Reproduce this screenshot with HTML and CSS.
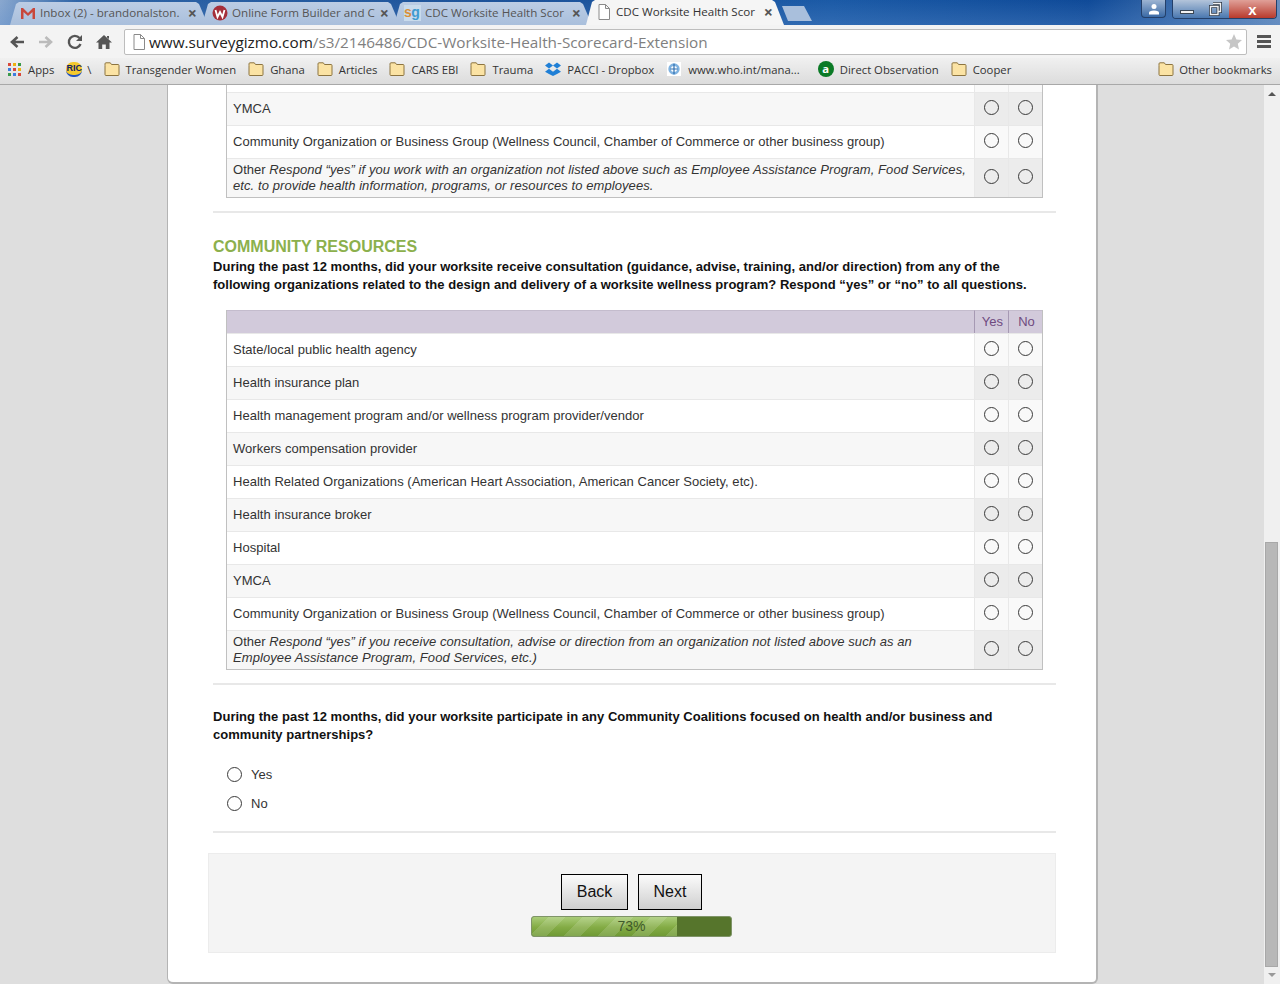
FILE: index.html
```html
<!DOCTYPE html>
<html lang="en">
  <head>
    <meta charset="UTF-8" />
    <meta name="viewport" content="width=device-width, initial-scale=1.0" />
    <title>CDC Worksite Health Scorecard</title>
    <link rel="stylesheet" href="styles.css">
  </head>
  <body>
    <svg class="defs" width="0" height="0">
      <symbol id="folder" viewBox="0 0 16 14">
        <path d="M1 3.500V12.500a1 1 0 0 0 1 1H14a1 1 0 0 0 1-1V3.500a1 1 0 0 0-1-1H7.500L6.300 .8H2A1 1 0 0 0 1 1.800Z" fill="#fbe3a4" stroke="#8c7440"/>
      </symbol>
      <symbol id="page" viewBox="0 0 14 16">
        <path d="M2 .5H8.500L12.500 4.500V15.500H2Z M8.500 .5V4.500H12.500" fill="#fff" stroke="#8a8a8a"/>
      </symbol>
    </svg>

    <!-- browser window top -->
    <div class="tabstrip">
      <div class="tab">
        <svg class="tab-icon" viewBox="0 0 16 16"><path d="M1 3H3L8 8L13 3H15V14H12.500V7L8 11L3.500 7V14H1Z" fill="#c8483c"/></svg>
        <span class="tab-title">Inbox (2) - brandonalston.</span><span class="tab-x">×</span>
      </div>
      <div class="tab">
        <svg class="tab-icon" viewBox="0 0 16 16"><circle cx="8" cy="8" r="7.500" fill="#a52f3a"/><path d="M3.500 5L5.500 12L8 7L10.500 12L12.500 5" fill="none" stroke="#fff" stroke-width="1.800"/></svg>
        <span class="tab-title">Online Form Builder and C</span><span class="tab-x">×</span>
      </div>
      <div class="tab">
        <span class="sg-icon"><b>s</b><i>g</i></span>
        <span class="tab-title">CDC Worksite Health Scor</span><span class="tab-x">×</span>
      </div>
      <div class="tab tab-active">
        <svg class="tab-icon" viewBox="0 0 14 16"><use href="#page"/></svg>
        <span class="tab-title">CDC Worksite Health Scor</span><span class="tab-x">×</span>
      </div>
      <div class="tab-new"></div>
      <div class="window-btns">
        <div class="win-btn win-user">
          <svg width="12" height="12" viewBox="0 0 12 12"><circle cx="6" cy="3.500" r="2.500" fill="#fff"/><path d="M1 11.500V9.500Q1 8 6 7.500Q11 8 11 9.500V11.500Z" fill="#fff"/></svg>
        </div>
        <div class="win-group">
          <div class="win-btn win-min"><span class="min-bar"></span></div>
          <div class="win-btn win-max">
            <svg width="13" height="14" viewBox="0 0 13 14"><path d="M4 1.500H11.500V9.500H9M1.500 4.500H9V12.500H1.500Z" fill="none" stroke="#2f3a48" stroke-width="3"/><path d="M4 1.500H11.500V9.500H9M1.500 4.500H9V12.500H1.500Z" fill="none" stroke="#f2f2f2" stroke-width="1.400"/></svg>
          </div>
          <div class="win-btn win-close">x</div>
        </div>
      </div>
    </div>

    <div class="toolbar">
      <svg class="tool-icon" viewBox="0 0 16 16"><path d="M15 8H4M8.500 3L3 8L8.500 13" fill="none" stroke="#555" stroke-width="2.600"/></svg>
      <svg class="tool-icon" viewBox="0 0 16 16"><path d="M1 8H12M7.500 3L13 8L7.500 13" fill="none" stroke="#bbb" stroke-width="2.600"/></svg>
      <svg class="tool-icon" viewBox="0 0 16 16"><path d="M13.500 10A6 6 0 1 1 12.500 4" fill="none" stroke="#555" stroke-width="2.400"/><path d="M15 1V7H9Z" fill="#555"/></svg>
      <svg class="tool-icon" viewBox="0 0 16 16"><path d="M8 1L16 8.500H13.500V15H9.800V10.500H6.200V15H2.500V8.500H0Z M11 2H13V5L11 3.500Z" fill="#555"/></svg>
      <div class="omnibox">
        <svg class="omni-page" viewBox="0 0 14 16"><use href="#page"/></svg>
        <span class="url"><span class="url-host">www.surveygizmo.com</span>/s3/2146486/CDC-Worksite-Health-Scorecard-Extension</span>
        <svg class="omni-star" viewBox="0 0 16 16"><path d="M8 0L10.400 5.400L16 6L11.800 9.800L13 15.500L8 12.600L3 15.500L4.200 9.800L0 6L5.600 5.400Z" fill="#c6c6c6"/></svg>
      </div>
      <div class="menu-btn"><span></span><span></span><span></span></div>
    </div>

    <div class="bookmarks">
      <div class="bm bm-apps">
        <span class="apps-grid"><i class="r"></i><i class="y"></i><i class="g"></i><i class="b"></i><i class="r"></i><i class="y"></i><i class="g"></i><i class="b"></i><i class="r"></i></span>
        Apps
      </div>
      <div class="bm bm-ric"><span class="ric-icon">RIC</span>\</div>
      <div class="bm"><svg class="bm-icon"><use href="#folder"/></svg>Transgender Women</div>
      <div class="bm"><svg class="bm-icon"><use href="#folder"/></svg>Ghana</div>
      <div class="bm"><svg class="bm-icon"><use href="#folder"/></svg>Articles</div>
      <div class="bm"><svg class="bm-icon"><use href="#folder"/></svg>CARS EBI</div>
      <div class="bm"><svg class="bm-icon"><use href="#folder"/></svg>Trauma</div>
      <div class="bm">
        <svg class="bm-icon" viewBox="0 0 16 14"><path d="M4 .5L8 3.500L4 6.500L0 3.500Z M12 .5L16 3.500L12 6.500L8 3.500Z M4 6.800L8 9.800L12 6.800L16 9.800L12 12L8 14L4 12L0 9.800Z" fill="#1f7fd6"/></svg>
        PACCI - Dropbox
      </div>
      <div class="bm bm-who">
        <svg class="bm-icon" viewBox="0 0 16 16"><rect width="16" height="16" fill="#fff"/><circle cx="8" cy="8" r="6.500" fill="#7fb2e0"/><circle cx="8" cy="8" r="3.500" fill="#fff"/><path d="M8 2V14M4 8H12" stroke="#2f6fb0" stroke-width="1.400"/></svg>
        www.who.int/mana...
      </div>
      <div class="bm"><span class="a-icon">a</span>Direct Observation</div>
      <div class="bm"><svg class="bm-icon"><use href="#folder"/></svg>Cooper</div>
      <div class="bm bm-other"><svg class="bm-icon"><use href="#folder"/></svg>Other bookmarks</div>
    </div>

    <div class="viewport">
      <div class="page-area">
        <div class="card">
          <table class="grid-table grid-top">
            <tr class="row-cut"><td></td><td class="opt"></td><td class="opt"></td></tr>
            <tr class="alt">
              <td>YMCA</td>
              <td class="opt"><input type="radio" name="a8"></td>
              <td class="opt"><input type="radio" name="a8"></td>
            </tr>
            <tr>
              <td>Community Organization or Business Group (Wellness Council, Chamber of Commerce or other business group)</td>
              <td class="opt"><input type="radio" name="a9"></td>
              <td class="opt"><input type="radio" name="a9"></td>
            </tr>
            <tr class="alt row-tall">
              <td>Other <em>Respond “yes” if you work with an organization not listed above such as Employee Assistance Program, Food Services, etc. to provide health information, programs, or resources to employees.</em></td>
              <td class="opt"><input type="radio" name="a10"></td>
              <td class="opt"><input type="radio" name="a10"></td>
            </tr>
          </table>
          <div class="divider"></div>

          <h2 class="section-title">COMMUNITY RESOURCES</h2>
          <p class="question">During the past 12 months, did your worksite receive consultation (guidance, advise, training, and/or direction) from any of the following organizations related to the design and delivery of a worksite wellness program? Respond “yes” or “no” to all questions.</p>

          <table class="grid-table">
            <tr class="head"><td></td><td class="opt">Yes</td><td class="opt">No</td></tr>
            <tr>
              <td>State/local public health agency</td>
              <td class="opt"><input type="radio" name="b1"></td>
              <td class="opt"><input type="radio" name="b1"></td>
            </tr>
            <tr class="alt">
              <td>Health insurance plan</td>
              <td class="opt"><input type="radio" name="b2"></td>
              <td class="opt"><input type="radio" name="b2"></td>
            </tr>
            <tr>
              <td>Health management program and/or wellness program provider/vendor</td>
              <td class="opt"><input type="radio" name="b3"></td>
              <td class="opt"><input type="radio" name="b3"></td>
            </tr>
            <tr class="alt">
              <td>Workers compensation provider</td>
              <td class="opt"><input type="radio" name="b4"></td>
              <td class="opt"><input type="radio" name="b4"></td>
            </tr>
            <tr>
              <td>Health Related Organizations (American Heart Association, American Cancer Society, etc).</td>
              <td class="opt"><input type="radio" name="b5"></td>
              <td class="opt"><input type="radio" name="b5"></td>
            </tr>
            <tr class="alt">
              <td>Health insurance broker</td>
              <td class="opt"><input type="radio" name="b6"></td>
              <td class="opt"><input type="radio" name="b6"></td>
            </tr>
            <tr>
              <td>Hospital</td>
              <td class="opt"><input type="radio" name="b7"></td>
              <td class="opt"><input type="radio" name="b7"></td>
            </tr>
            <tr class="alt">
              <td>YMCA</td>
              <td class="opt"><input type="radio" name="b8"></td>
              <td class="opt"><input type="radio" name="b8"></td>
            </tr>
            <tr>
              <td>Community Organization or Business Group (Wellness Council, Chamber of Commerce or other business group)</td>
              <td class="opt"><input type="radio" name="b9"></td>
              <td class="opt"><input type="radio" name="b9"></td>
            </tr>
            <tr class="alt row-tall">
              <td>Other <em>Respond “yes” if you receive consultation, advise or direction from an organization not listed above such as an<br>Employee Assistance Program, Food Services, etc.)</em></td>
              <td class="opt"><input type="radio" name="b10"></td>
              <td class="opt"><input type="radio" name="b10"></td>
            </tr>
          </table>
          <div class="divider"></div>

          <p class="question question-solo">During the past 12 months, did your worksite participate in any Community Coalitions focused on health and/or business and community partnerships?</p>
          <div class="choices">
            <label class="choice"><input type="radio" name="c1">Yes</label>
            <label class="choice"><input type="radio" name="c1">No</label>
          </div>
          <div class="divider divider-last"></div>

          <div class="footer-panel">
            <div class="footer-btns">
              <button class="nav-btn nav-back">Back</button>
              <button class="nav-btn nav-next">Next</button>
            </div>
            <div class="progress">
              <div class="progress-fill" style="width: 73%"></div>
              <span class="progress-text">73%</span>
            </div>
          </div>
        </div>
      </div>

      <div class="scrollbar">
        <div class="arrow-up"></div>
        <div class="scroll-track"><div class="scroll-thumb"></div></div>
        <div class="arrow-down"></div>
      </div>
    </div>
  </body>
</html>
```

FILE: styles.css
```css
* {
  box-sizing: border-box;
}
html,
body {
  margin: 0;
  height: 100%;
  overflow: hidden;
}
body {
  display: flex;
  flex-direction: column;
  font-family: "Liberation Sans", Arial, sans-serif;
  background-color: #dedede;
}
.defs {
  position: absolute;
}

/* tabs */
.tabstrip {
  height: 25px;
  flex: none;
  display: flex;
  align-items: flex-end;
  padding-left: 10px;
  background:
    linear-gradient(#0c479600, #5b8ccb55),
    linear-gradient(90deg, #8aa8cf 0, #2e64a6 6%, #1c5299 40%, #1b5aa6 65%, #0f4a98 85%, #6b8fbd 100%);
  overflow: hidden;
}
.tab {
  width: 198px;
  height: 23px;
  margin-right: -6px;
  padding: 0 6px 2px 10px;
  display: flex;
  align-items: center;
  gap: 4px;
  font-family: "Open Sans", sans-serif;
  font-size: 11.6px;
  color: #555;
  background: linear-gradient(#bccde4, #a9bfdc);
  clip-path: polygon(0 100%, 6px 2px, 9px 0, 186px 0, 189px 2px, 198px 100%);
}
.tab-active {
  background: #f5f5f5;
  color: #333;
  height: 25px;
}
.tab-icon {
  width: 16px;
  height: 16px;
  flex: none;
}
.sg-icon {
  width: 17px;
  height: 16px;
  flex: none;
  font-family: "Liberation Sans", sans-serif;
  font-size: 14px;
  font-weight: bold;
  line-height: 14px;
  background: #c9dbec;
  letter-spacing: -.5px;
}
.sg-icon b {
  color: #d9903a;
}
.sg-icon i {
  color: #3f9ad0;
  font-style: normal;
}
.tab-title {
  white-space: nowrap;
}
.tab-x {
  margin-left: auto;
  padding-right: 5px;
  font-size: 16px;
  font-weight: bold;
  line-height: 16px;
  color: #555;
}
.tab-new {
  width: 30px;
  height: 15px;
  margin-left: 4px;
  margin-bottom: 4px;
  background: #a9bfdc;
  clip-path: polygon(0 0, 22px 0, 30px 100%, 6px 100%);
}
.window-btns {
  margin-left: auto;
  align-self: flex-start;
  display: flex;
  gap: 6px;
  padding-right: 3px;
}
.win-btn {
  height: 18px;
  display: flex;
  align-items: center;
  justify-content: center;
  color: #fff;
}
.win-user {
  width: 25px;
  border: 1px solid #24406a;
  border-top: none;
  border-radius: 0 0 4px 4px;
  background: linear-gradient(#9db4d2, #3a6aa6);
}
.win-group {
  display: flex;
  border: 1px solid #24406a;
  border-top: none;
  border-radius: 0 0 4px 4px;
  overflow: hidden;
}
.win-min,
.win-max {
  width: 28px;
  background: linear-gradient(#b3c4da, #4a78b0);
}
.win-close {
  width: 47px;
  font-weight: bold;
  font-size: 15px;
  background: linear-gradient(#e0a098, #b83a2c);
}
.min-bar {
  width: 14px;
  height: 4px;
  margin-top: 6px;
  background: #f2f2f2;
  border: 1px solid #3a4654;
}

/* toolbar */
.toolbar {
  height: 33px;
  flex: none;
  display: flex;
  align-items: center;
  padding: 0 9px;
  background: #f3f3f3;
}
.tool-icon {
  width: 16px;
  height: 16px;
  margin-right: 13px;
}
.omnibox {
  width: 1123px;
  height: 26px;
  margin-left: -1px;
  display: flex;
  align-items: center;
  padding: 0 4px 0 7px;
  background: #fff;
  border: 1px solid #bdbdbd;
  border-radius: 2px;
}
.omni-page {
  width: 14px;
  height: 16px;
  margin-right: 3px;
}
.url {
  flex: 1;
  font-family: "Open Sans", sans-serif;
  font-size: 15.3px;
  color: #808080;
  white-space: nowrap;
}
.url-host {
  color: #222;
}
.omni-star {
  width: 16px;
  height: 16px;
}
.menu-btn {
  margin-left: 10px;
  width: 14px;
  display: flex;
  flex-direction: column;
  gap: 2px;
}
.menu-btn span {
  height: 3px;
  background: #555;
}

/* bookmarks bar */
.bookmarks {
  height: 27px;
  flex: none;
  display: flex;
  align-items: center;
  padding: 0 8px 4px;
  gap: 12px;
  font-family: "Open Sans", sans-serif;
  font-size: 11.3px;
  color: #333;
  background: linear-gradient(#f0f0f0, #dcdcdc);
  border-bottom: 1px solid #a8a8a8;
}
.bm {
  display: flex;
  align-items: center;
  gap: 6px;
  white-space: nowrap;
}
.bm-apps {
  gap: 7px;
}
.bm-ric {
  gap: 5px;
}
.bm-who {
  margin-right: 6px;
}
.bm-icon {
  width: 16px;
  height: 14px;
  flex: none;
}
.bm-other {
  margin-left: auto;
  gap: 5px;
}
.apps-grid {
  width: 13px;
  height: 13px;
  display: grid;
  grid-template-columns: repeat(3, 3px);
  grid-auto-rows: 3px;
  gap: 2px;
}
.apps-grid .r { background: #d9483b; }
.apps-grid .y { background: #eeb211; }
.apps-grid .g { background: #3a9a4b; }
.apps-grid .b { background: #3c7de0; }
.ric-icon {
  width: 16px;
  height: 15px;
  font-family: "Liberation Sans", sans-serif;
  font-size: 9px;
  font-weight: bold;
  line-height: 13px;
  text-align: center;
  color: #10206a;
  background: #f4c92e;
  border-radius: 7px;
  border-bottom: 2px solid #2050c0;
}
.a-icon {
  width: 16px;
  height: 16px;
  border-radius: 50%;
  background: #0b7a26;
  color: #fff;
  font-weight: bold;
  text-align: center;
  line-height: 15px;
}

/* page */
.viewport {
  flex: 1;
  min-height: 0;
  display: flex;
}
.page-area {
  flex: 1;
  overflow: hidden;
  padding-left: 167px;
}
.card {
  width: 931px;
  height: 899px;
  padding: 0 40px 0 41px;
  background: #fff;
  border: 2px solid #b4b4b4;
  border-width: 0 2px 2px 1px;
  border-radius: 0 0 6px 6px;
}
.grid-table {
  width: 817px;
  margin-left: 17px;
  table-layout: fixed;
  border-collapse: separate;
  border-spacing: 0;
  border: 1px solid #c0c0c0;
  border-top: none;
  font-size: 13px;
  letter-spacing: .03px;
  color: #333;
}
.grid-table em {
  letter-spacing: .08px;
}
.grid-table td {
  height: 33px;
  padding: 0 6px;
  background: #fff;
  border-top: 1px solid #e8e8e8;
  line-height: 16px;
}
.grid-table td.opt {
  width: 34px;
  padding: 0;
  text-align: center;
  background: #f9f9f9;
  border-left: 1px solid #e8e8e8;
}
.grid-table .alt td {
  background: #f7f7f7;
}
.grid-table .alt td.opt {
  background: #ececec;
}
.grid-table .row-cut td {
  height: 7px;
  border-top: none;
}
.grid-table .row-tall td {
  height: 39px;
}
.grid-table .head td {
  height: 23px;
  background: #d2cadb;
  border-top: 1px solid #c4bccd;
}
.grid-table .head td.opt {
  background: #d2cadb;
  color: #6f4a80;
  padding-left: 2px;
  border-left: 1px solid #a699b3;
}
input[type="radio"] {
  appearance: none;
  width: 15px;
  height: 15px;
  margin: 0 0 3px;
  vertical-align: middle;
  border: 1.5px solid #3a3a3a;
  border-radius: 50%;
}
.divider {
  height: 2px;
  margin-top: 13px;
  margin-left: 4px;
  background: #e8e8e8;
}
.divider-last {
  margin-top: 20px;
}
.section-title {
  margin: 24px 0 0 4px;
  font-size: 16px;
  line-height: 20px;
  color: #8cb04c;
}
.question {
  margin: 1px 0 16px 4px;
  font-size: 13px;
  letter-spacing: .03px;
  font-weight: bold;
  line-height: 18px;
  color: #111;
}
.question-solo {
  margin-top: 23px;
  margin-bottom: 0;
}
.choices {
  margin: 23px 0 0 18px;
  display: flex;
  flex-direction: column;
  gap: 14px;
}
.choice {
  display: flex;
  align-items: center;
  gap: 9px;
  height: 15px;
  font-size: 13px;
  color: #333;
}
.choice input[type="radio"] {
  margin: 0;
}
.footer-panel {
  height: 100px;
  width: 848px;
  margin: 20px 0 0 -1px;
  padding-top: 20px;
  display: flex;
  flex-direction: column;
  align-items: center;
  background: #f4f4f4;
  border: 1px solid #ececec;
}
.footer-btns {
  display: flex;
  gap: 10px;
  margin-right: 1px;
}
.nav-btn {
  height: 36px;
  font-family: "Liberation Sans", sans-serif;
  font-size: 16px;
  color: #111;
  background: linear-gradient(#fbfbfb, #cfcfcf);
  border: 1px solid #000;
  border-radius: 0;
  padding: 0;
}
.nav-back {
  width: 67px;
}
.nav-next {
  width: 64px;
}
.progress {
  width: 201px;
  height: 21px;
  margin: 6px 1px 0 0;
  position: relative;
  background: #56752c;
  border: 1px solid #7f9468;
  border-radius: 3px;
  overflow: hidden;
  text-align: center;
}
.progress-fill {
  height: 100%;
  background:
    repeating-linear-gradient(135deg, #fff0 0 12px, #ffffff22 12px 24px),
    linear-gradient(#a9cc78, #83ab44 55%, #6f9a35);
}
.progress-text {
  position: absolute;
  top: 1px;
  left: 0;
  right: 0;
  font-size: 14px;
  color: #3f5a2a;
}

/* scrollbar */
.scrollbar {
  width: 16px;
  flex: none;
  display: flex;
  flex-direction: column;
  align-items: center;
  background: #f0f0f0;
}
.arrow-up,
.arrow-down {
  width: 0;
  height: 0;
  border-left: 4px solid #fff0;
  border-right: 4px solid #fff0;
}
.arrow-up {
  margin-top: 7px;
  border-bottom: 4px solid #555;
}
.arrow-down {
  margin: 6px 0 7px;
  border-top: 4px solid #999;
}
.scroll-track {
  flex: 1;
  width: 100%;
  display: flex;
  flex-direction: column;
  justify-content: flex-end;
  padding: 0 2px 0 1px;
}
.scroll-thumb {
  height: 425px;
  background: #b8b8b8;
  border: 1px solid #a8a8a8;
}
```
